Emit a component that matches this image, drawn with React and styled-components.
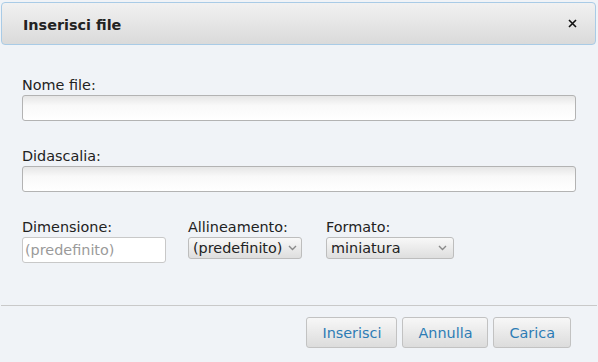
import React from "react";
import styled, { createGlobalStyle } from "styled-components";

const Global = createGlobalStyle`
  html, body { margin: 0; padding: 0; }
  body {
    background: #f0f3f7;
    font-family: "DejaVu Sans", "Liberation Sans", sans-serif;
    font-size: 14.4px;
    color: #222;
    width: 598px;
    height: 362px;
    overflow: hidden;
  }
`;

const Dialog = styled.div`
  display: flex;
  flex-direction: column;
  padding-top: 2px;
`;

const Header = styled.div`
  display: flex;
  align-items: center;
  justify-content: space-between;
  height: 41px;
  margin: 0 2px 0 1px;
  padding: 0 17px 0 21px;
  border: 1px solid #a9cbe6;
  border-radius: 4px;
  background: linear-gradient(to bottom, #f1f1f1 0%, #dadada 100%);
`;

const Title = styled.h1`
  margin: 4px 0 0 0;
  font-size: 14.4px;
  font-weight: bold;
  color: #222;
  line-height: 17px;
`;

const Close = styled.button`
  border: 0;
  background: none;
  padding: 0;
  width: 12px;
  height: 12px;
  display: flex;
  align-items: center;
  justify-content: center;
  cursor: pointer;
`;

const Body = styled.div`
  display: flex;
  flex-direction: column;
  padding: 32px 22px 0 22px;
  gap: 27px;
`;

const Field = styled.div`
  display: flex;
  flex-direction: column;
  gap: 1px;
  margin-left: ${(p) => p.$ml || 0}px;
`;

const Label = styled.label`
  line-height: 17px;
  color: #222;
`;

const TextInput = styled.input`
  box-sizing: border-box;
  height: ${(p) => p.$h || 26}px;
  width: ${(p) => (p.$w ? p.$w + "px" : "100%")};
  border: 1px solid ${(p) => (p.$light ? "#c8c8c8" : "#b3b3b3")};
  border-radius: 3px;
  padding: 0 2px;
  font-family: inherit;
  font-size: 14.4px;
  color: #333;
  background: ${(p) =>
    p.$light
      ? "#fff"
      : "linear-gradient(to bottom, #e6e6e6 0%, #f9f9f9 40%, #ffffff 100%)"};
  outline: none;
  &::placeholder { color: #9a9a9a; }
`;

const Row = styled.div`
  display: flex;
  gap: 22px;
  align-items: flex-start;
`;

const SelectWrap = styled.span`
  position: relative;
  display: inline-block;
  width: ${(p) => p.$w}px;
  height: 22px;
`;

const Select = styled.select`
  appearance: none;
  -webkit-appearance: none;
  box-sizing: border-box;
  width: 100%;
  height: 22px;
  border: 1px solid #bdbdbd;
  border-radius: 3px;
  padding: 0 0 0 4px;
  font-family: inherit;
  font-size: 14.4px;
  color: #222;
  background: linear-gradient(to bottom, #f8f8f8 0%, #dedede 100%);
  outline: none;
`;

const Chevron = styled.svg`
  position: absolute;
  right: ${(p) => p.$r}px;
  top: 8px;
  pointer-events: none;
`;

const Separator = styled.hr`
  margin: 42px 1px 0 1px;
  border: 0;
  border-top: 1px solid #c9c9c9;
  height: 0;
`;

const Footer = styled.div`
  display: flex;
  justify-content: flex-end;
  gap: 5px;
  padding: 11px 27px 0 0;
`;

const Button = styled.button`
  box-sizing: border-box;
  height: 31px;
  padding: 0 15px;
  border: 1px solid #c2c2c2;
  border-radius: 3px;
  background: linear-gradient(to bottom, #f7f7f7 0%, #dcdcdc 100%);
  font-family: inherit;
  font-size: 14.4px;
  color: #2d7cb5;
  cursor: pointer;
`;

const ChevronIcon = ({ r }) => (
  <Chevron $r={r} width="9" height="6" viewBox="0 0 9 6">
    <path d="M1 1 L4.5 4.5 L8 1" fill="none" stroke="#8a8a8a" strokeWidth="1.4" />
  </Chevron>
);

export default function App() {
  return (
    <>
      <Global />
      <Dialog>
        <Header>
          <Title>Inserisci file</Title>
          <Close aria-label="Chiudi">
            <svg width="9" height="9" viewBox="0 0 9 9">
              <path d="M1 1 L8 8 M8 1 L1 8" stroke="#111" strokeWidth="1.6" />
            </svg>
          </Close>
        </Header>
        <Body>
          <Field>
            <Label>Nome file:</Label>
            <TextInput />
          </Field>
          <Field>
            <Label>Didascalia:</Label>
            <TextInput />
          </Field>
          <Row>
            <Field>
              <Label>Dimensione:</Label>
              <TextInput $light $w={144} $h={26} placeholder="(predefinito)" />
            </Field>
            <Field>
              <Label>Allineamento:</Label>
              <SelectWrap $w={114}>
                <Select defaultValue="def">
                  <option value="def">(predefinito)</option>
                  <option>sinistra</option>
                  <option>centro</option>
                  <option>destra</option>
                </Select>
                <ChevronIcon r={5} />
              </SelectWrap>
            </Field>
            <Field $ml={2}>
              <Label>Formato:</Label>
              <SelectWrap $w={128}>
                <Select defaultValue="min">
                  <option value="min">miniatura</option>
                  <option>incorniciato</option>
                  <option>senza bordo</option>
                </Select>
                <ChevronIcon r={7} />
              </SelectWrap>
            </Field>
          </Row>
        </Body>
        <Separator />
        <Footer>
          <Button>Inserisci</Button>
          <Button>Annulla</Button>
          <Button>Carica</Button>
        </Footer>
      </Dialog>
    </>
  );
}
